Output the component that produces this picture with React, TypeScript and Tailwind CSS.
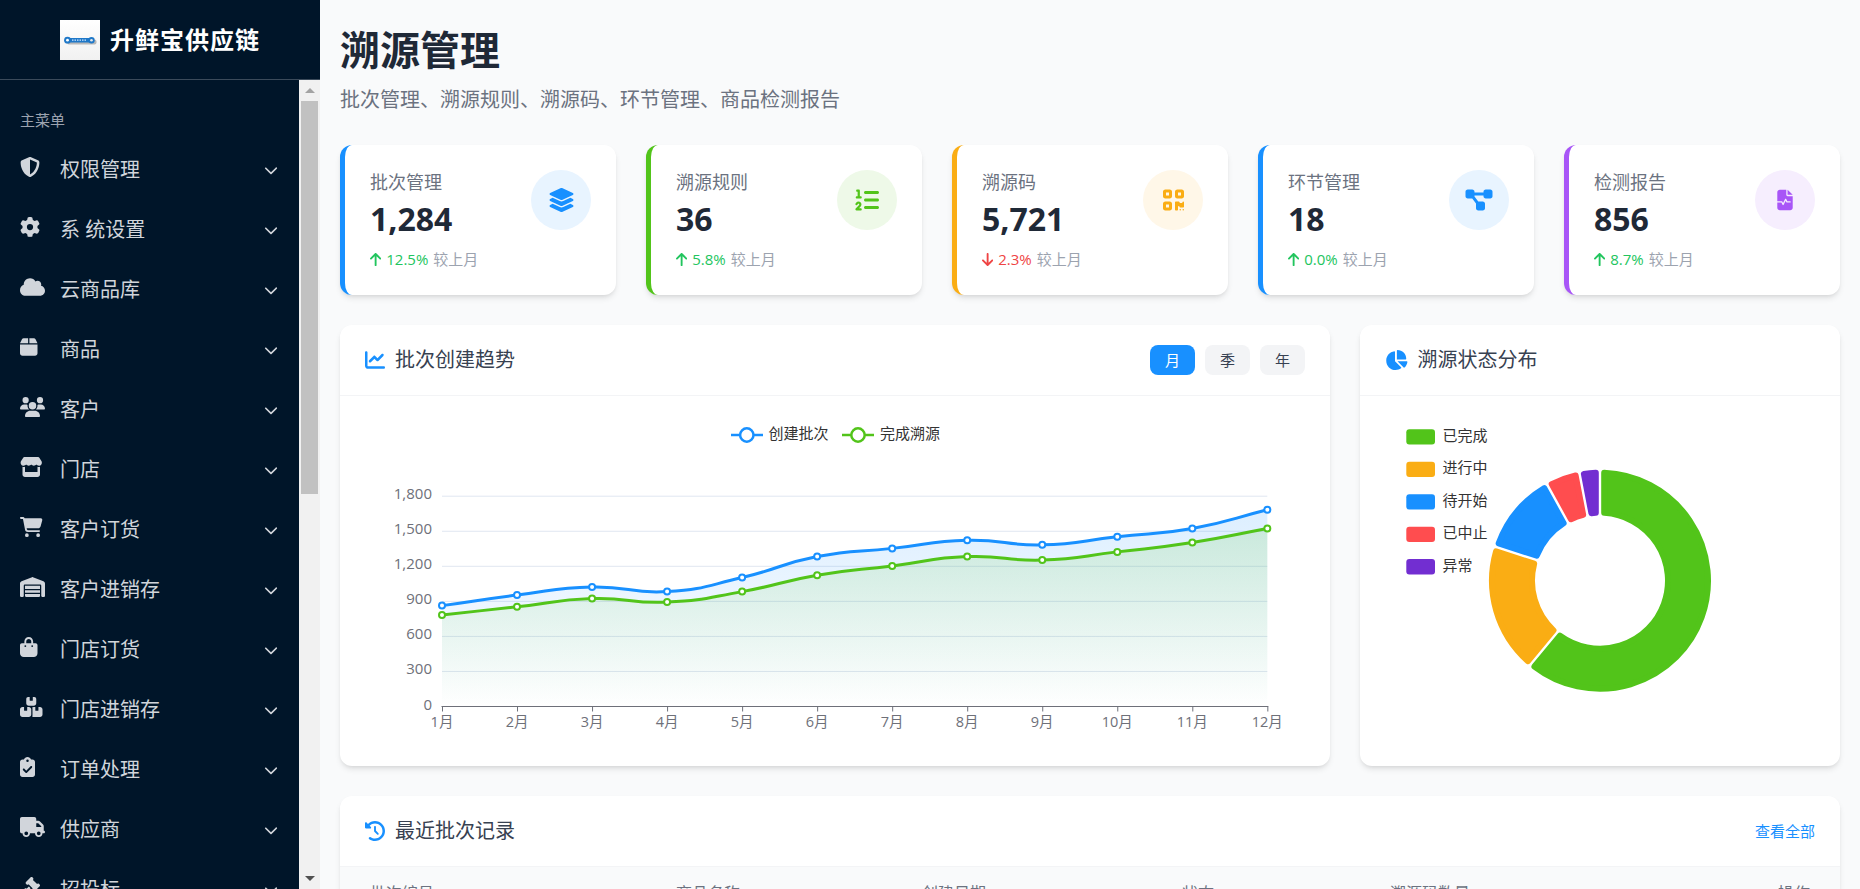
import React from 'react';
import {
  FaShieldHalved, FaGear, FaCloud, FaBox, FaUsers, FaStore, FaCartShopping, FaWarehouse,
  FaBagShopping, FaBoxesStacked, FaClipboardCheck, FaTruck, FaGavel, FaChevronDown,
  FaLayerGroup, FaListOl, FaQrcode, FaDiagramProject, FaFileWaveform, FaArrowUp, FaArrowDown,
  FaChartLine, FaChartPie, FaClockRotateLeft,
} from 'react-icons/fa6';
import type { IconType } from 'react-icons';

// react-icons draws into a 1em square, so wide glyphs need their real width set
const menu: { label: string; icon: IconType; w: string }[] = [
  { label: '权限管理', icon: FaShieldHalved, w: 'w-5' },
  { label: '系 统设置', icon: FaGear, w: 'w-5' },
  { label: '云商品库', icon: FaCloud, w: 'w-[25px]' },
  { label: '商品', icon: FaBox, w: 'w-[17.5px]' },
  { label: '客户', icon: FaUsers, w: 'w-[25px]' },
  { label: '门店', icon: FaStore, w: 'w-[22.5px]' },
  { label: '客户订货', icon: FaCartShopping, w: 'w-[22.5px]' },
  { label: '客户进销存', icon: FaWarehouse, w: 'w-[25px]' },
  { label: '门店订货', icon: FaBagShopping, w: 'w-[17.5px]' },
  { label: '门店进销存', icon: FaBoxesStacked, w: 'w-[22.5px]' },
  { label: '订单处理', icon: FaClipboardCheck, w: 'w-[15px]' },
  { label: '供应商', icon: FaTruck, w: 'w-[25px]' },
  { label: '招投标', icon: FaGavel, w: 'w-5' },
];

const stats = [
  { label: '批次管理', value: '1,284', pct: '12.5%', up: true, icon: FaLayerGroup, w: 'w-[27px]', border: 'border-[#1890ff]', circle: 'bg-[#e8f4ff] text-[#1890ff]' },
  { label: '溯源规则', value: '36', pct: '5.8%', up: true, icon: FaListOl, w: 'w-6', border: 'border-[#52c41a]', circle: 'bg-[#eef9e8] text-[#52c41a]' },
  { label: '溯源码', value: '5,721', pct: '2.3%', up: false, icon: FaQrcode, w: 'w-[21px]', border: 'border-[#faad14]', circle: 'bg-[#fff7e8] text-[#faad14]' },
  { label: '环节管理', value: '18', pct: '0.0%', up: true, icon: FaDiagramProject, w: 'w-[30px]', border: 'border-[#1890ff]', circle: 'bg-[#e8f4ff] text-[#1890ff]' },
  { label: '检测报告', value: '856', pct: '8.7%', up: true, icon: FaFileWaveform, w: 'w-[18px]', border: 'border-[#a855f7]', circle: 'bg-[#f6eefe] text-[#a855f7]' },
];

const months = ['1月', '2月', '3月', '4月', '5月', '6月', '7月', '8月', '9月', '10月', '11月', '12月'];
const created = [860, 950, 1020, 980, 1100, 1280, 1350, 1420, 1380, 1450, 1520, 1680];
const finished = [780, 850, 920, 890, 980, 1120, 1200, 1280, 1250, 1320, 1400, 1520];

const X0 = 442;
const STEP = 75.03;
const Y0 = 706.5;
const UNIT = 210.3 / 1800;

type Pt = [number, number];

const toPts = (vals: number[]): Pt[] => vals.map((v, i) => [X0 + i * STEP, Y0 - 0.4 - v * UNIT]);

// same idea as the echarts smooth line
function smoothPath(pts: Pt[], smooth = 0.5) {
  let d = `M${pts[0][0]} ${pts[0][1]}`;
  const cps = pts.map((p, i) => {
    const prev = pts[Math.max(i - 1, 0)];
    const next = pts[Math.min(i + 1, pts.length - 1)];
    const vx = next[0] - prev[0];
    const vy = next[1] - prev[1];
    const a = Math.hypot(p[0] - prev[0], p[1] - prev[1]);
    const b = Math.hypot(next[0] - p[0], next[1] - p[1]);
    const r = b / (a + b);
    return {
      out: [p[0] + vx * smooth * r, p[1] + vy * smooth * r],
      inc: [p[0] - vx * smooth * (1 - r), p[1] - vy * smooth * (1 - r)],
    };
  });
  for (let i = 1; i < pts.length; i++) {
    d += ` C${cps[i - 1].out[0]} ${cps[i - 1].out[1]} ${cps[i].inc[0]} ${cps[i].inc[1]} ${pts[i][0]} ${pts[i][1]}`;
  }
  return d;
}

const TrendChart = () => {
  const series = [
    { pts: toPts(created), color: '#1890ff', fill: 'url(#areaBlue)' },
    { pts: toPts(finished), color: '#52c41a', fill: 'url(#areaGreen)' },
  ];
  const ticks = [0, 300, 600, 900, 1200, 1500, 1800];
  return (
    <svg viewBox="340 396 990 370" className="block w-full h-[370px]">
      <defs>
        <linearGradient id="areaBlue" x1="0" y1="0" x2="0" y2="1">
          <stop offset="0" stopColor="#1890ff" stopOpacity="0.15" />
          <stop offset="1" stopColor="#1890ff" stopOpacity="0" />
        </linearGradient>
        <linearGradient id="areaGreen" x1="0" y1="0" x2="0" y2="1">
          <stop offset="0" stopColor="#52c41a" stopOpacity="0.15" />
          <stop offset="1" stopColor="#52c41a" stopOpacity="0" />
        </linearGradient>
      </defs>

      <g fontSize="15" fill="#333333">
        <line x1="731" x2="763" y1="435" y2="435" stroke="#1890ff" strokeWidth="2.5" />
        <circle cx="746.8" cy="435" r="6.7" fill="#fff" stroke="#1890ff" strokeWidth="2.5" />
        <text x="768.5" y="439">创建批次</text>
        <line x1="842" x2="874" y1="435" y2="435" stroke="#52c41a" strokeWidth="2.5" />
        <circle cx="858" cy="435" r="6.7" fill="#fff" stroke="#52c41a" strokeWidth="2.5" />
        <text x="880" y="439">完成溯源</text>
      </g>

      {ticks.slice(1).map((t) => (
        <line key={t} x1={X0} x2={X0 + 11 * STEP} y1={Y0 - t * UNIT} y2={Y0 - t * UNIT} stroke="#e0e6f1" strokeWidth="1" />
      ))}
      {ticks.map((t) => (
        <text key={t} x="432" y={Y0 - t * UNIT + 3} textAnchor="end" fontSize="15" fill="#6e7079">
          {t.toLocaleString('en-US')}
        </text>
      ))}

      {series.map((s) => (
        <path key={s.color} d={`${smoothPath(s.pts)} L${s.pts[11][0]} ${Y0} L${s.pts[0][0]} ${Y0} Z`} fill={s.fill} />
      ))}

      <line x1={X0 - 0.5} x2={X0 + 11 * STEP + 1} y1={Y0} y2={Y0} stroke="#6e7079" strokeWidth="1" />
      {months.map((m, i) => (
        <g key={m}>
          <line x1={X0 + i * STEP + 0.5} x2={X0 + i * STEP + 0.5} y1={Y0} y2={Y0 + 5} stroke="#6e7079" strokeWidth="1" />
          <text x={X0 + i * STEP} y="727" textAnchor="middle" fontSize="14.5" fill="#6e7079">{m}</text>
        </g>
      ))}

      {series.map((s) => (
        <g key={s.color}>
          <path d={smoothPath(s.pts)} fill="none" stroke={s.color} strokeWidth="3" />
          {s.pts.map((p) => (
            <circle key={p[0]} cx={p[0]} cy={p[1]} r="3" fill="#fff" stroke={s.color} strokeWidth="2" />
          ))}
        </g>
      ))}
    </svg>
  );
};

const pieData = [
  { label: '已完成', value: 61, color: '#52c41a' },
  { label: '进行中', value: 19, color: '#faad14' },
  { label: '待开始', value: 12, color: '#1890ff' },
  { label: '已中止', value: 5, color: '#ff4d4f' },
  { label: '异常', value: 3, color: '#722ed1' },
];

const CX = 1600;
const CY = 580.7;
const ROUND = 3;

function sector(from: number, to: number) {
  const ro = 111 - ROUND;
  const ri = 65 + ROUND;
  const off = 1.2 + ROUND;
  const at = (r: number, a: number) => `${CX + r * Math.sin(a)} ${CY - r * Math.cos(a)}`;
  const big = to - from > Math.PI ? 1 : 0;
  return [
    `M${at(ro, from + off / ro)}`,
    `A${ro} ${ro} 0 ${big} 1 ${at(ro, to - off / ro)}`,
    `L${at(ri, to - off / ri)}`,
    `A${ri} ${ri} 0 ${big} 0 ${at(ri, from + off / ri)}`,
    'Z',
  ].join(' ');
}

const StatusPie = () => {
  let acc = 0;
  return (
    <svg viewBox="1360 396 480 370" className="block w-full h-[370px]">
      {pieData.map((d) => {
        const from = (acc / 100) * Math.PI * 2;
        acc += d.value;
        const to = (acc / 100) * Math.PI * 2;
        return (
          <path key={d.label} d={sector(from, to)} fill={d.color} stroke={d.color} strokeWidth={ROUND * 2} strokeLinejoin="round" />
        );
      })}
      {pieData.map((d, i) => (
        <g key={d.label}>
          <rect x="1406.3" y={429.3 + i * 32.45} width="28.7" height="15.3" rx="3" fill={d.color} />
          <text x="1442.5" y={441 + i * 32.45} fontSize="15" fill="#333333">{d.label}</text>
        </g>
      ))}
    </svg>
  );
};

const Logo = () => (
  <svg viewBox="0 0 40 40" className="w-10 h-10 shrink-0">
    <defs>
      <linearGradient id="logoBg" x1="0" y1="0" x2="0" y2="1">
        <stop offset="0" stopColor="#ffffff" />
        <stop offset="1" stopColor="#f1f1f1" />
      </linearGradient>
    </defs>
    <rect width="40" height="40" fill="url(#logoBg)" />
    <rect x="7" y="19.5" width="29.5" height="5" rx="2" fill="#b9b9b9" />
    <rect x="6" y="18" width="26" height="4.4" rx="1.5" fill="#1f78c8" />
    <circle cx="7.5" cy="20.2" r="3.4" fill="#1f78c8" />
    <circle cx="7.5" cy="20.2" r="1.4" fill="#fff" />
    <circle cx="31.5" cy="20.2" r="3.2" fill="#1f78c8" />
    <circle cx="31.5" cy="20.2" r="1.3" fill="#e8e8e8" />
    <path d="M12 20.2h15" stroke="#cfe6ff" strokeWidth="1.2" strokeDasharray="1.5 1" />
  </svg>
);

const FakeScrollbar = () => (
  <div className="w-[21px] shrink-0 bg-[#f1f1f1] flex flex-col">
    <div className="h-[21px] flex items-center justify-center">
      <svg viewBox="0 0 10 5" className="w-[10px] h-[5px]"><path d="M5 0l5 5H0z" fill="#a3a3a3" /></svg>
    </div>
    <div className="mx-[2px] h-[393px] bg-[#c1c1c1]" />
    <div className="flex-1" />
    <div className="h-[21px] flex items-center justify-center">
      <svg viewBox="0 0 10 5" className="w-[10px] h-[5px]"><path d="M0 0h10L5 5z" fill="#505050" /></svg>
    </div>
  </div>
);

const Sidebar = () => (
  <aside className="w-[320px] shrink-0 h-full bg-[#001529] flex flex-col">
    <div className="h-[80px] shrink-0 border-b border-[#3b4a5a] flex items-center justify-center gap-[10px]">
      <Logo />
      <span className="text-white text-2xl font-bold tracking-[1px]">升鲜宝供应链</span>
    </div>
    <div className="flex-1 min-h-0 flex">
      <nav className="flex-1 min-w-0 overflow-hidden">
        <div className="pt-[30px] pb-[10px] pl-5 text-[15px] leading-5 text-[#9ca3af]">主菜单</div>
        {menu.map(({ label, icon: Icon, w }) => (
          <div key={label} className="h-[60px] flex items-center pl-5 pr-[21px] text-[#d1d5db]">
            <span className="w-10 shrink-0 mb-[6px]"><Icon className={`h-5 ${w}`} /></span>
            <span className="flex-1 text-[20px] leading-7 whitespace-pre">{label}</span>
            <FaChevronDown className="text-[14px]" />
          </div>
        ))}
      </nav>
      <FakeScrollbar />
    </div>
  </aside>
);

const StatCard = ({ s }: { s: (typeof stats)[number] }) => {
  const Icon = s.icon;
  return (
    <div className={`flex-1 h-[150px] bg-white rounded-xl border-l-[5px] ${s.border} shadow-md p-[25px] flex justify-between`}>
      <div>
        <div className="text-[18px] leading-[25px] text-[#6b7280]">{s.label}</div>
        <div className="mt-1 text-[32px] leading-10 font-bold text-[#1f2937]">{s.value}</div>
        <div className="mt-[10px] h-5 flex items-center text-[15px] leading-5">
          {s.up ? <FaArrowUp className="h-[15px] w-[11.25px] text-[#22c55e]" /> : <FaArrowDown className="h-[15px] w-[11.25px] text-[#ef4444]" />}
          <span className={`ml-[5px] ${s.up ? 'text-[#22c55e]' : 'text-[#ef4444]'}`}>{s.pct}</span>
          <span className="ml-[5px] text-[#9ca3af]">较上月</span>
        </div>
      </div>
      <div className={`w-[60px] h-[60px] rounded-full flex items-center justify-center ${s.circle}`}>
        <Icon className={`h-6 ${s.w}`} />
      </div>
    </div>
  );
};

const CardHead = ({ icon: Icon, title, w = 'w-5', children }: { icon: IconType; title: string; w?: string; children?: React.ReactNode }) => (
  <div className="h-[71px] px-[25px] border-b border-[#f3f4f6] flex items-center justify-between">
    <div className="flex items-center gap-[10px] text-[20px] text-[#374151]">
      <Icon className={`h-5 ${w} text-[#1890ff]`} />
      <span>{title}</span>
    </div>
    {children}
  </div>
);

export default function App() {
  return (
    <div className="h-screen w-full flex overflow-hidden bg-[#f9fafb] font-['Open_Sans','Noto_Sans_CJK_SC',sans-serif]">
      <Sidebar />
      <main className="flex-1 min-w-0 h-full overflow-hidden pt-5 pl-5 pr-5">
        <h1 className="text-[40px] leading-[60px] font-bold text-[#1f2937]">溯源管理</h1>
        <p className="mt-[5px] text-[20px] leading-[30px] text-[#6b7280]">批次管理、溯源规则、溯源码、环节管理、商品检测报告</p>

        <div className="mt-[30px] flex gap-[30px]">
          {stats.map((s) => <StatCard key={s.label} s={s} />)}
        </div>

        <div className="mt-[30px] flex gap-[30px]">
          <section className="flex-1 min-w-0 bg-white rounded-xl shadow-md">
            <CardHead icon={FaChartLine} title="批次创建趋势">
              <div className="flex gap-[10px] text-[15px]">
                <button className="w-[45px] h-[30px] rounded-lg bg-[#1890ff] text-white">月</button>
                <button className="w-[45px] h-[30px] rounded-lg bg-[#f3f4f6] text-[#374151]">季</button>
                <button className="w-[45px] h-[30px] rounded-lg bg-[#f3f4f6] text-[#374151]">年</button>
              </div>
            </CardHead>
            <TrendChart />
          </section>
          <section className="w-[480px] shrink-0 bg-white rounded-xl shadow-md">
            <CardHead icon={FaChartPie} w="w-[22.5px]" title="溯源状态分布" />
            <StatusPie />
          </section>
        </div>

        <section className="mt-[30px] bg-white rounded-xl shadow-md">
          <CardHead icon={FaClockRotateLeft} title="最近批次记录">
            <a className="text-[15px] text-[#1890ff]">查看全部</a>
          </CardHead>
          <div className="grid grid-cols-[306px_246px_260px_208px_1fr_auto] px-[30px] py-[14px] bg-[#f9fafb] text-[16px] leading-6 text-[#6b7280]">
            <span>批次编号</span>
            <span>商品名称</span>
            <span>创建日期</span>
            <span>状态</span>
            <span>溯源码数量</span>
            <span>操作</span>
          </div>
        </section>
      </main>
    </div>
  );
}
